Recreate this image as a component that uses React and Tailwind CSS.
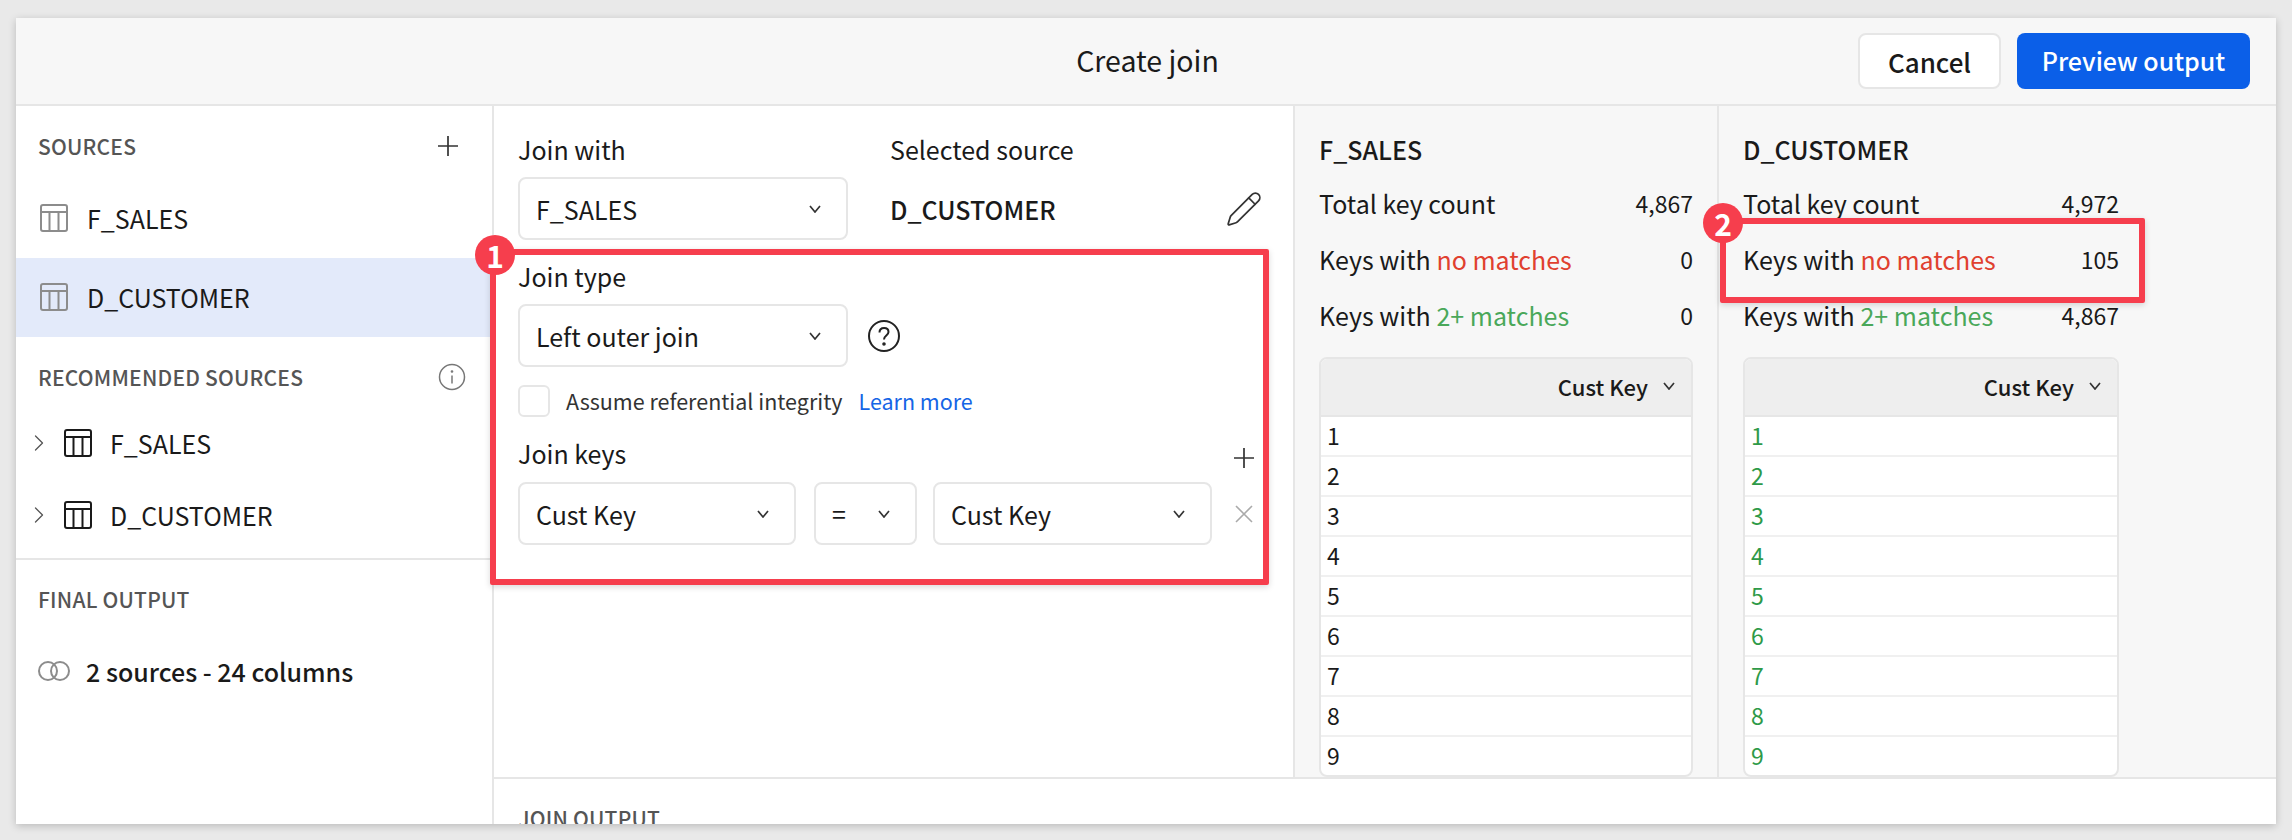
import React from "react";
import { ChevronRight, Pencil } from "lucide-react";

const KEYS = [1, 2, 3, 4, 5, 6, 7, 8, 9];

function TableIcon({ className }) {
    return (
        <svg viewBox="0 0 28 28" fill="none" stroke="currentColor" strokeWidth="2" className={className}>
            <rect x="1" y="1" width="26" height="26" rx="2" />
            <path d="M1 8h26M9.5 8v19M18.5 8v19" />
        </svg>
    );
}

function Chevron({ className = "" }) {
    return (
        <svg viewBox="0 0 12 8" fill="none" stroke="#333" strokeWidth="1.7" className={`h-2 w-3 shrink-0 ${className}`}>
            <path d="M1 1l5 6 5-6" />
        </svg>
    );
}

function PlusIcon({ className = "" }) {
    return (
        <svg viewBox="0 0 20 20" fill="none" stroke="#333" strokeWidth="1.7" className={`h-5 w-5 shrink-0 ${className}`}>
            <path d="M10 0v20M0 10h20" />
        </svg>
    );
}

function Select({ label, className }) {
    return (
        <div className={`flex h-[63px] items-center justify-between rounded-lg border-2 border-[#e6e6e6] bg-white pl-4 pr-[25px] ${className}`}>
            <span className="text-[25px] leading-8">{label}</span>
            <Chevron />
        </div>
    );
}

function SectionTitle({ children }) {
    return <div className="text-[21px] font-medium leading-8 tracking-[0.2px] text-[#555]">{children}</div>;
}

function Badge({ n, className }) {
    return (
        <div className={`absolute flex h-10 w-10 items-center justify-center rounded-full bg-[#f63e4d] text-[30px] font-bold leading-none text-white ${className}`}>
            {n}
        </div>
    );
}

function StatRow({ children, value, className }) {
    return (
        <div className={`flex h-8 items-center justify-between text-[25px] leading-8 ${className}`}>
            <span>{children}</span>
            <span className="text-[23px]">{value}</span>
        </div>
    );
}

function KeyColumn({ title, stats, rowClass, className }) {
    return (
        <div className={`w-[424px] shrink-0 px-6 pt-[27px] ${className}`}>
            <div className="text-[25px] font-medium leading-8">{title}</div>
            <StatRow value={stats[0]} className="mt-[22px]">Total key count</StatRow>
            <StatRow value={stats[1]} className="mt-6">
                Keys with <span className="text-[#e0402f]">no matches</span>
            </StatRow>
            <StatRow value={stats[2]} className="mt-6">
                Keys with <span className="text-[#4aa85a]">2+ matches</span>
            </StatRow>
            <div className="mt-[26px] overflow-hidden rounded-lg border-2 border-[#e6e6e6] bg-white">
                <div className="flex h-[58px] items-center justify-end gap-[15px] border-b-2 border-[#e6e6e6] bg-[#eeeeee] pb-[2px] pr-4 text-[22px] font-medium leading-8">
                    Cust Key
                    <Chevron />
                </div>
                {KEYS.map((k) => (
                    <div key={k} className={`flex h-10 items-center border-b-2 border-[#f0f0f0] pb-[2px] pl-[6px] text-[23px] leading-8 last:h-[38px] last:border-b-0 ${rowClass}`}>
                        {k}
                    </div>
                ))}
            </div>
        </div>
    );
}

export default function App() {
    return (
        <div className="h-[840px] overflow-hidden bg-[#e9e9e9] pb-4 pl-4 pr-4 pt-[18px] font-['Noto_Sans_CJK_SC','Noto_Sans',sans-serif] text-[#1a1a1a]">
            <div className="relative flex h-[806px] flex-col overflow-hidden bg-white shadow-[0_2px_8px_rgba(0,0,0,0.2)]">
                {/* Header */}
                <div className="relative flex h-[88px] shrink-0 items-center justify-end gap-4 border-b-2 border-[#e6e6e6] bg-[#f7f7f7] pr-[26px]">
                    <div className="absolute left-0 right-0 pb-[2px] pl-[3px] text-center text-[28.5px] leading-9">Create join</div>
                    <button className="relative h-14 w-[143px] rounded-lg border-2 border-[#e6e6e6] bg-white text-[26px] font-medium">Cancel</button>
                    <button className="relative h-14 w-[233px] rounded-lg bg-[#0b5fe8] text-[25px] font-medium text-white">Preview output</button>
                </div>

                <div className="flex min-h-0 flex-1">
                    {/* Sidebar */}
                    <div className="w-[478px] shrink-0 border-r-2 border-[#e6e6e6]">
                        <div className="flex items-center justify-between pb-[17px] pl-[22px] pr-[34px] pt-6">
                            <SectionTitle>SOURCES</SectionTitle>
                            <PlusIcon />
                        </div>
                        <div className="flex h-[79px] items-center gap-[19px] pb-[2px] pl-6 text-[25px] leading-8">
                            <TableIcon className="h-7 w-7 text-[#8c8c8c]" />
                            F_SALES
                        </div>
                        <div className="flex h-[79px] items-center gap-[19px] bg-[#e3eafa] pb-[2px] pl-6 text-[25px] leading-8">
                            <TableIcon className="h-7 w-7 text-[#8c8c8c]" />
                            D_CUSTOMER
                        </div>
                        <div className="flex items-center justify-between pl-[22px] pr-[26px] pt-6">
                            <SectionTitle>RECOMMENDED SOURCES</SectionTitle>
                            <svg viewBox="0 0 28 28" fill="none" stroke="#777" strokeWidth="1.5" className="h-7 w-7">
                                <circle cx="14" cy="14" r="12.5" />
                                <path d="M14 12.5v8" />
                                <circle cx="14" cy="8.5" r="0.6" fill="#777" />
                            </svg>
                        </div>
                        <div className="mt-[14px] border-b-2 border-[#e6e6e6] pb-[7px]">
                            {["F_SALES", "D_CUSTOMER"].map((name) => (
                                <div key={name} className="flex h-[72px] items-center pl-[9px] text-[25px] leading-8">
                                    <ChevronRight size={28} strokeWidth={1.1} className="text-[#555]" />
                                    <TableIcon className="ml-[11px] mr-[18px] h-7 w-7 text-[#1a1a1a]" />
                                    {name}
                                </div>
                            ))}
                        </div>
                        <div className="pl-[22px] pt-[23px]">
                            <SectionTitle>FINAL OUTPUT</SectionTitle>
                        </div>
                        <div className="mt-9 flex h-10 items-center gap-[16px] pl-[22px] text-[25px] font-medium leading-8">
                            <svg viewBox="0 0 32 20" fill="none" stroke="#8c8c8c" strokeWidth="2" className="h-5 w-8">
                                <circle cx="10" cy="10" r="9" />
                                <circle cx="22" cy="10" r="9" />
                            </svg>
                            2 sources - 24 columns
                        </div>
                    </div>

                    <div className="flex min-w-0 flex-1 flex-col">
                        <div className="flex h-[673px] shrink-0 border-b-2 border-[#e6e6e6]">
                            {/* Join form */}
                            <div className="w-[799px] shrink-0 pl-6 pr-[33px] pt-[27px]">
                                <div className="flex gap-[42px]">
                                    <div className="w-[330px] shrink-0">
                                        <div className="text-[25px] leading-8">Join with</div>
                                        <Select label="F_SALES" className="mt-3" />
                                    </div>
                                    <div className="flex-1">
                                        <div className="text-[25px] leading-8">Selected source</div>
                                        <div className="mt-3 flex h-[63px] items-center justify-between">
                                            <span className="text-[25px] font-medium leading-8">D_CUSTOMER</span>
                                            <Pencil size={38} strokeWidth={1.1} className="mr-[-3px] text-[#333]" />
                                        </div>
                                    </div>
                                </div>
                                <div className="mt-[20px] text-[25px] leading-8">Join type</div>
                                <div className="mt-3 flex items-center gap-5">
                                    <Select label="Left outer join" className="w-[330px]" />
                                    <svg viewBox="0 0 32 32" fill="none" stroke="#222" strokeWidth="2" className="h-8 w-8">
                                        <circle cx="16" cy="16" r="15" />
                                        <path d="M11.5 12.5c0-2.8 2-4.5 4.6-4.5 2.6 0 4.4 1.7 4.4 4 0 3.6-4.5 3.6-4.5 7.5" />
                                        <circle cx="16" cy="24" r="0.8" fill="#222" />
                                    </svg>
                                </div>
                                <div className="mt-[18px] flex h-8 items-center">
                                    <div className="h-8 w-8 rounded-md border-2 border-[#e6e6e6] bg-white" />
                                    <span className="ml-4 text-[21.5px] leading-8 text-[#333]">Assume referential integrity</span>
                                    <span className="ml-4 text-[21.5px] leading-8 text-[#1565e6]">Learn more</span>
                                </div>
                                <div className="mt-[20px] flex h-8 items-center justify-between">
                                    <span className="text-[25px] leading-8">Join keys</span>
                                    <PlusIcon className="mr-[6px] mt-[9px]" />
                                </div>
                                <div className="mt-[13px] flex items-center">
                                    <Select label="Cust Key" className="w-[278px]" />
                                    <div className="ml-[18px] flex h-[63px] w-[103px] items-center justify-between rounded-lg border-2 border-[#e6e6e6] bg-white pl-4 pr-[25px] text-[25px]">
                                        =
                                        <Chevron />
                                    </div>
                                    <Select label="Cust Key" className="ml-[16px] w-[279px]" />
                                    <svg viewBox="0 0 18 18" fill="none" stroke="#aaa" strokeWidth="1.6" className="ml-[23px] h-[18px] w-[18px]">
                                        <path d="M1 1l16 16M17 1L1 17" />
                                    </svg>
                                </div>
                            </div>

                            {/* Key stats */}
                            <div className="flex flex-1 border-l-2 border-[#e6e6e6] bg-[#f7f7f7]">
                                <KeyColumn title="F_SALES" stats={["4,867", "0", "0"]} rowClass="text-[#1a1a1a]" className="border-r-2 border-[#e6e6e6]" />
                                <KeyColumn title="D_CUSTOMER" stats={["4,972", "105", "4,867"]} rowClass="text-[#2e9a48]" />
                            </div>
                        </div>
                        <div className="pl-6 pt-[23px]">
                            <SectionTitle>JOIN OUTPUT</SectionTitle>
                        </div>
                    </div>
                </div>

                {/* Annotations */}
                <div className="absolute left-[474px] top-[231px] h-[336px] w-[779px] rounded-[2px] border-[6px] border-[#f63e4d] shadow-[0_2px_6px_rgba(0,0,0,0.15)]" />
                <Badge n="1" className="left-[459px] top-[217px]" />
                <div className="absolute left-[1704px] top-[200px] h-[85px] w-[425px] rounded-[2px] border-[6px] border-[#f63e4d] shadow-[0_2px_6px_rgba(0,0,0,0.15)]" />
                <Badge n="2" className="left-[1687px] top-[185px]" />
            </div>
        </div>
    );
}
